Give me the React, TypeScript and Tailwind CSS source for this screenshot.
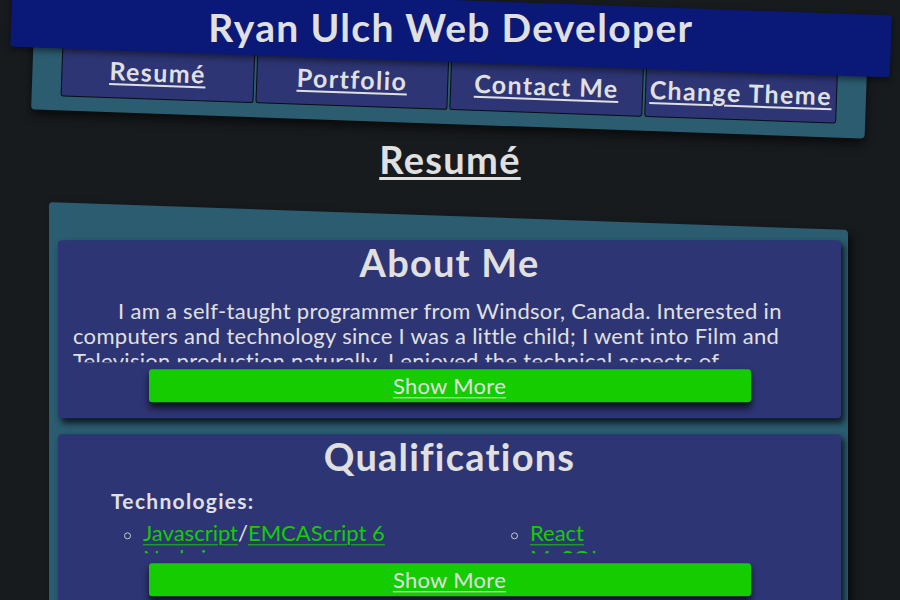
import React from "react";

const navItems = ["Resumé", "Portfolio", "Contact Me", "Change Theme"];

function ShowMore() {
  return (
    <button className="mx-auto block h-[33px] w-[602px] rounded-[3px] bg-[#14cc00] text-[22px] leading-[33px] tracking-[0.3px] text-[#e0e0e0] underline decoration-1 underline-offset-[3px] shadow-[0_5px_7px_rgba(0,0,0,0.7)]">
      Show More
    </button>
  );
}

function Bullet() {
  return (
    <span className="mr-[12px] -ml-[19px] inline-block h-[7px] w-[7px] rounded-full border border-[#c8c8d0] align-middle" />
  );
}

const link = "text-[#14cc00] underline decoration-1 underline-offset-[3px]";

export default function App() {
  return (
    <div className="h-[600px] overflow-hidden bg-[#181b1e] font-['Lato',sans-serif] text-[#e0e0e0]">
      <header className="rotate-2">
        <div className="relative z-10 mx-[10px] flex h-[62px] items-center justify-center rounded-b-[4px] bg-[#0a1878] pb-[7px] shadow-[0_3px_6px_rgba(0,0,0,0.5)]">
          <h1 className="-rotate-2 text-[39px] font-bold leading-none tracking-[1.3px]">Ryan Ulch Web Developer</h1>
        </div>
        <nav className="mx-[33px] -mt-[30px] flex gap-[2px] rounded-[4px] bg-[#2b5c70] px-[29px] pt-[24px] pb-[14px] shadow-[0_6px_10px_rgba(0,0,0,0.6)]">
          {navItems.map((n) => (
            <a
              key={n}
              className="flex h-[54px] flex-1 items-center justify-center rounded-[3px] border border-[#0b0d12] bg-[#2d3574] text-[25px] font-bold tracking-[1.4px] underline decoration-2 underline-offset-[3px]"
            >
              {n}
            </a>
          ))}
        </nav>
      </header>

      <h2 className="mt-[12px] text-center text-[38px] font-bold leading-[46px] tracking-[1.3px] underline decoration-[3px] underline-offset-[3px]">
        Resumé
      </h2>

      <main className="mt-[20px] ml-[49px] w-[799px] origin-top-left skew-y-2 rounded-[4px] bg-[#2b5c70] pt-[38px] pr-[7px] pl-[9px] pb-[40px] shadow-[4px_4px_8px_rgba(0,0,0,0.6)]">
        <div className="origin-top-left -skew-y-2 flex flex-col gap-[16px]">
          <section className="rounded-[4px] bg-[#2d3574] px-[15px] pb-[16px] shadow-[3px_4px_6px_rgba(0,0,0,0.75)]">
            <h3 className="text-center text-[38px] font-bold leading-[44px] tracking-[1.2px]">About Me</h3>
            <div className="mt-[14px] h-[64px] overflow-hidden pr-[26px]">
              <p className="indent-[45px] text-[22px] leading-[25px] tracking-[0.3px]">
                I am a self-taught programmer from Windsor, Canada. Interested in computers and technology since I
                was a little child; I went into Film and Television production naturally. I enjoyed the technical
                aspects of production and the creative problem solving it required.
              </p>
            </div>
            <div className="mt-[7px]">
              <ShowMore />
            </div>
          </section>

          <section className="rounded-[4px] bg-[#2d3574] px-[15px] pb-[16px] shadow-[3px_4px_6px_rgba(0,0,0,0.75)]">
            <h3 className="text-center text-[38px] font-bold leading-[44px] tracking-[1.2px]">Qualifications</h3>
            <div className="mt-[14px] h-[61px] overflow-hidden">
              <h4 className="ml-[38px] text-[21px] font-bold leading-[18px] tracking-[1.3px]">Technologies:</h4>
              <ul className="mt-[10px] grid grid-cols-[387px_1fr] pl-[70px] text-[22px] leading-[25px]">
                <li>
                  <Bullet />
                  <a className={link}>Javascript</a>/<a className={link}>EMCAScript 6</a>
                </li>
                <li>
                  <Bullet />
                  <a className={link}>React</a>
                </li>
                <li>
                  <Bullet />
                  <a className={link}>Node.js</a>
                </li>
                <li>
                  <Bullet />
                  <a className={link}>MySQL</a>
                </li>
              </ul>
            </div>
            <div className="mt-[10px]">
              <ShowMore />
            </div>
          </section>
        </div>
      </main>
    </div>
  );
}
